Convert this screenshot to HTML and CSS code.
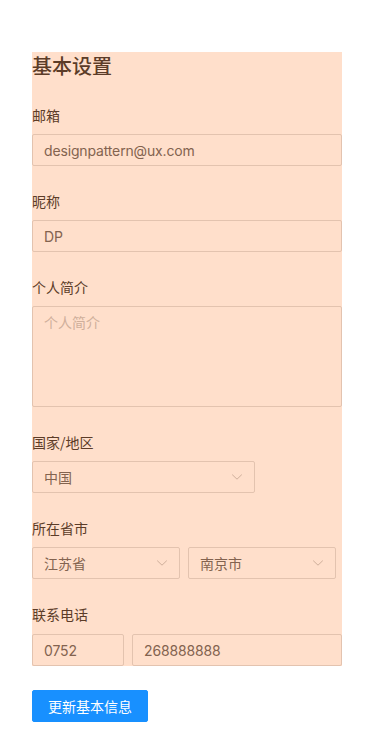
FILE: index.html
```html
<!DOCTYPE html>
<html lang="zh-CN">
<head>
<meta charset="utf-8">
<title>基本设置</title>
<link rel="stylesheet" href="styles.css">
</head>
<body>
<div class="page">
  <form class="form">
    <div class="panel">
      <h2 class="title">基本设置</h2>
      <div class="item">
        <label class="label">邮箱</label>
        <input class="input" type="text" value="designpattern@ux.com">
      </div>
      <div class="item">
        <label class="label">昵称</label>
        <input class="input" type="text" value="DP">
      </div>
      <div class="item">
        <label class="label">个人简介</label>
        <textarea class="input textarea" placeholder="个人简介"></textarea>
      </div>
      <div class="item">
        <label class="label">国家/地区</label>
        <div class="select country">
          <span class="select-value">中国</span>
          <svg class="arrow" viewBox="0 0 12 12" width="12" height="12"><path d="M1.2 3.6 L6 8.2 L10.8 3.6" fill="none" stroke="currentColor" stroke-width="1"/></svg>
        </div>
      </div>
      <div class="item">
        <label class="label">所在省市</label>
        <div class="row">
          <div class="select half">
            <span class="select-value">江苏省</span>
            <svg class="arrow" viewBox="0 0 12 12" width="12" height="12"><path d="M1.2 3.6 L6 8.2 L10.8 3.6" fill="none" stroke="currentColor" stroke-width="1"/></svg>
          </div>
          <div class="select half">
            <span class="select-value">南京市</span>
            <svg class="arrow" viewBox="0 0 12 12" width="12" height="12"><path d="M1.2 3.6 L6 8.2 L10.8 3.6" fill="none" stroke="currentColor" stroke-width="1"/></svg>
          </div>
        </div>
      </div>
      <div class="item last">
        <label class="label">联系电话</label>
        <div class="row phone">
          <input class="input area" type="text" value="0752">
          <input class="input number" type="text" value="268888888">
        </div>
      </div>
    </div>
    <button type="button" class="btn">更新基本信息</button>
  </form>
</div>
</body>
</html>
```

FILE: styles.css
```css
* { box-sizing: border-box; }
html, body {
  margin: 0;
  padding: 0;
  background: #ffffff;
}
body {
  font-family: Inter, "Noto Sans CJK SC", sans-serif;
  font-size: 14px;
  color: #5c3c28;
}
.page {
  padding: 52px 38px 0 32px;
}
.form {
  width: 310px;
  margin: 0;
}
.panel {
  background: #ffdfcb;
}
.title {
  margin: 0 0 24px 0;
  font-family: "Noto Sans CJK SC", sans-serif;
  font-size: 20px;
  line-height: 28px;
  font-weight: 500;
  color: #5c3c28;
}
.item {
  display: flex;
  flex-direction: column;
  margin-bottom: 24px;
}
.item.last {
  margin-bottom: 0;
}
.label {
  font-family: "Noto Sans CJK SC", sans-serif;
  font-size: 14px;
  line-height: 22px;
  padding-bottom: 8px;
  color: #5c3c28;
}
.input {
  display: block;
  width: 100%;
  min-width: 0;
  height: 32px;
  margin: 0;
  padding: 4px 11px;
  border: 1px solid #e3c3af;
  border-radius: 2px;
  background: #ffdfcb;
  font-family: Inter, "Noto Sans CJK SC", sans-serif;
  font-size: 14px;
  line-height: 22px;
  letter-spacing: -0.15px;
  color: #83634f;
  outline: none;
}
.textarea {
  height: 101px;
  resize: none;
}
.textarea::placeholder {
  font-family: "Noto Sans CJK SC", sans-serif;
  letter-spacing: 0;
  color: #cfaf9b;
}
.select {
  display: flex;
  align-items: center;
  justify-content: space-between;
  height: 32px;
  padding: 0 11px;
  border: 1px solid #e3c3af;
  border-radius: 2px;
  background: #ffdfcb;
  color: #83634f;
}
.select-value {
  font-family: "Noto Sans CJK SC", sans-serif;
  font-size: 14px;
  line-height: 22px;
}
.arrow {
  display: block;
  color: #cfaf9b;
  flex: none;
}
.country {
  width: 223px;
}
.row {
  display: flex;
  gap: 8px;
}
.half {
  width: 148px;
}
.phone {
  margin-top: 1px;
}
.phone .area {
  width: 92px;
  flex: none;
}
.phone .number {
  flex: 1 1 0;
  width: auto;
}
.btn {
  display: block;
  margin-top: 24px;
  height: 32px;
  padding: 0 15px;
  border: 1px solid #1890ff;
  border-radius: 2px;
  background: #1890ff;
  color: #ffffff;
  font-family: "Noto Sans CJK SC", sans-serif;
  font-size: 14px;
  line-height: 22px;
  cursor: pointer;
}
```
